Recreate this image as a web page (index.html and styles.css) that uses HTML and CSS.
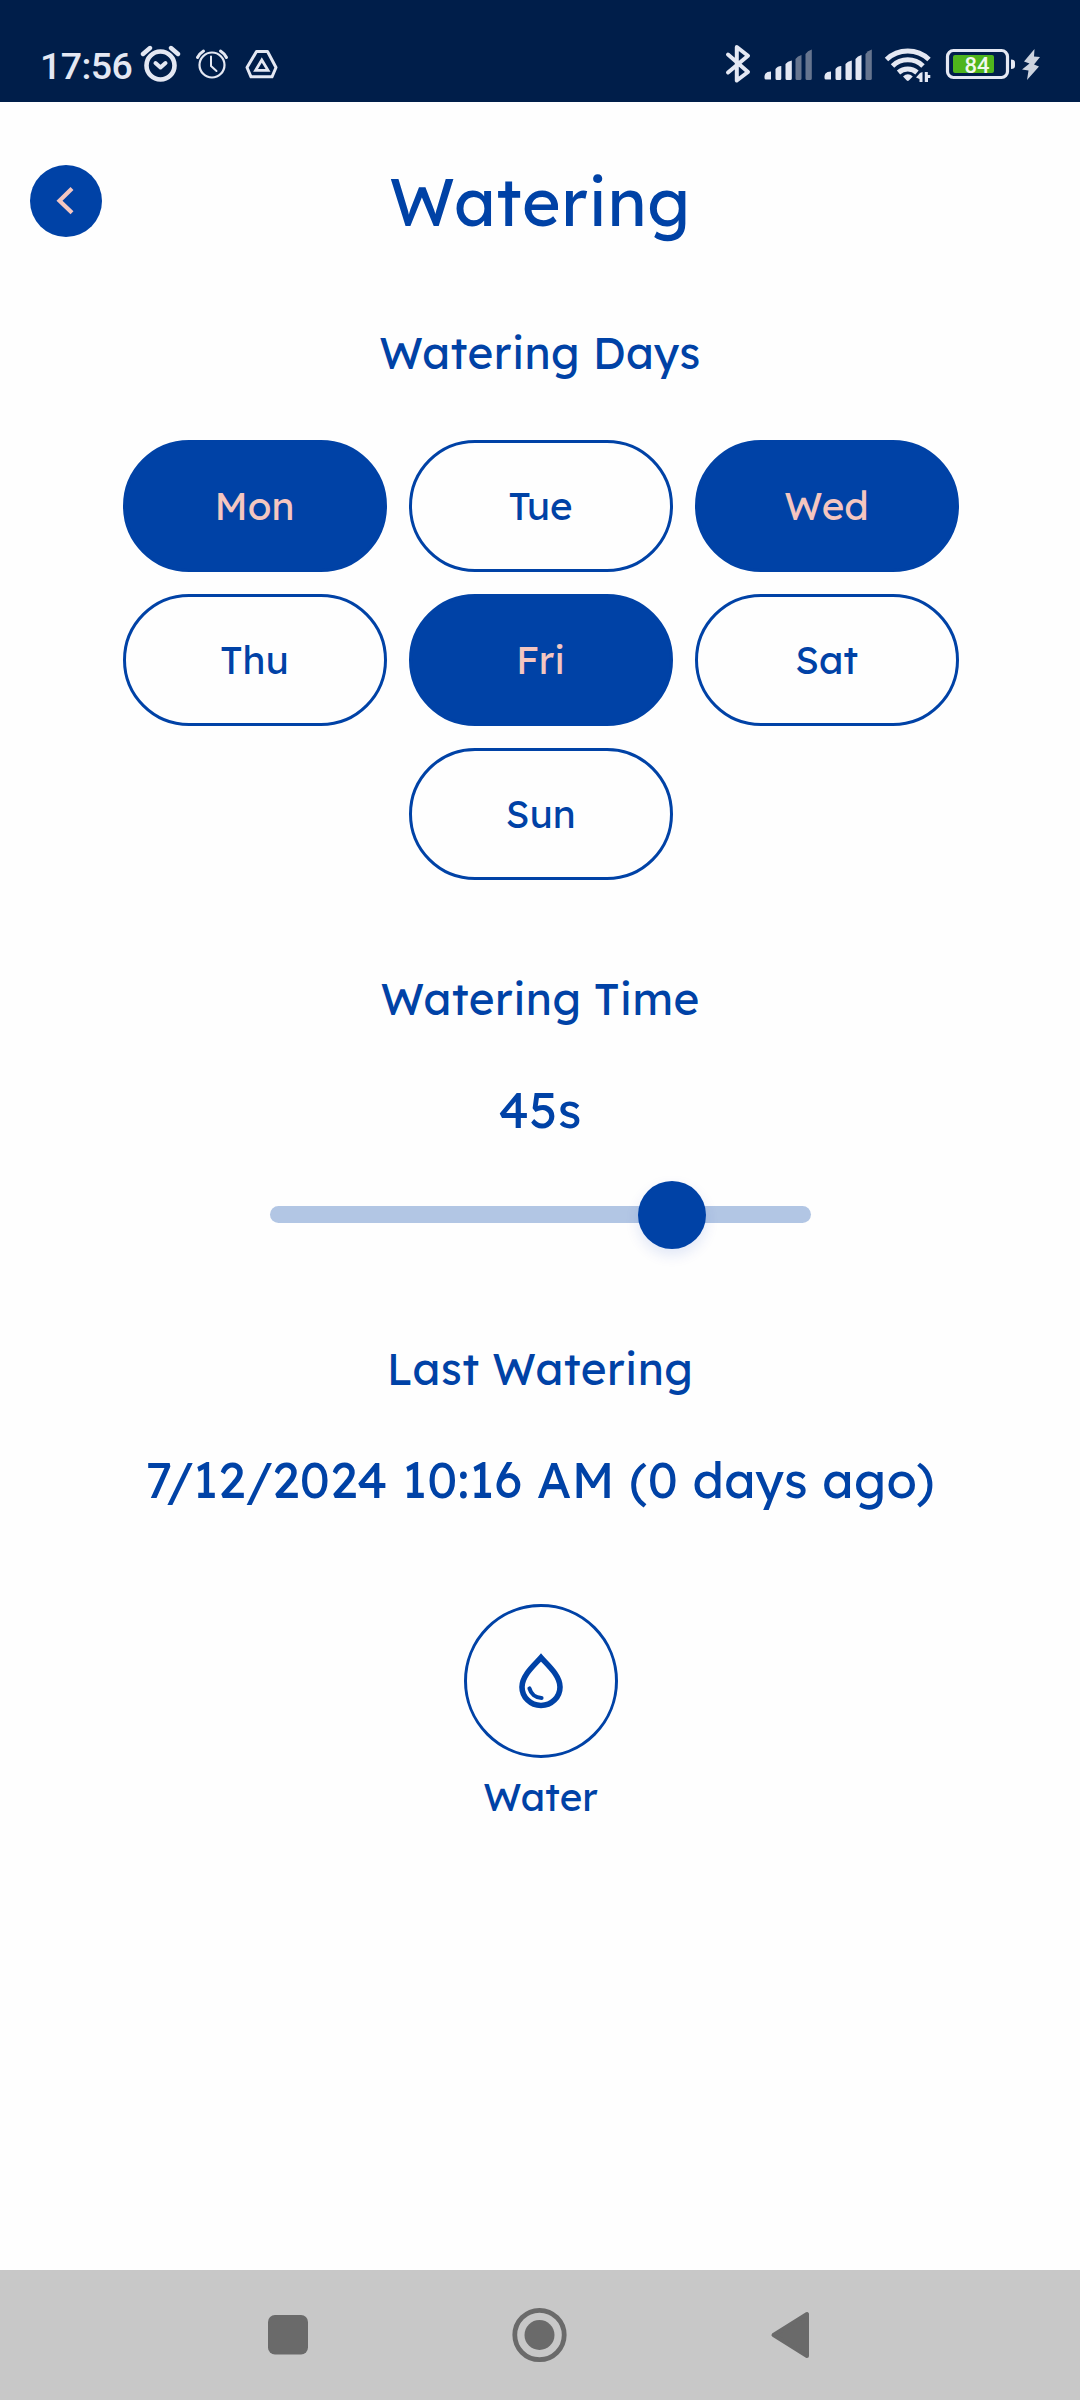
FILE: index.html
```html
<!DOCTYPE html>
<html lang="en">
<head>
<meta charset="utf-8">
<title>Watering</title>
<link rel="stylesheet" href="styles.css">
</head>
<body>
<div class="screen">
  <div class="status">
    <span class="clock">17:56</span>
    <svg class="status-left" width="138" height="42" viewBox="140 42 138 42" fill="none" stroke="#e4e8f3" stroke-linecap="round" stroke-linejoin="round">
      <circle cx="160.500" cy="65.500" r="14" stroke-width="4.600"/>
      <path d="M143 54l7-6M178 54l-7-6" stroke-width="4.400"/>
      <path d="M155.500 63l5 4.500l5-4.500" stroke-width="4"/>
      <circle cx="212" cy="65" r="12.500" stroke-width="2.200"/>
      <path d="M197.500 57.500q2-4 6-6.500M226.500 57.500q-2-4-6-6.500" stroke-width="3"/>
      <path d="M211 56.500v9.500l5.500 5" stroke-width="2"/>
      <path d="M256.500 51.500h11l8.500 16l-4 9.300h-21l-4-9.300z" stroke-width="3"/>
      <path d="M261.800 60l6.200 10.300h-12.400z" stroke-width="2.800" stroke-linejoin="miter"/>
    </svg>
    <svg class="status-right" width="318" height="42" viewBox="724 42 318 42" fill="#e4e8f3">
      <path d="M728 54.500L748 72L736.800 80.500V47L748 55.800L728 72.500" fill="none" stroke="#e4e8f3" stroke-width="4" stroke-linecap="round" stroke-linejoin="round"/>
      <path d="M764.500 76q0-2.500 3-4l3.500-.5v8h-5q-1.500 0-1.500-1.500zM775.500 69q2-3 5.800-3v12.500q0 1.500-1.500 1.500h-2.800q-1.500 0-1.500-1.500zM785.500 64q2-3 6.300-3.500v18q0 1.500-1.500 1.500h-3.300q-1.500 0-1.500-1.500z"/>
      <path d="M795.500 59q2-3 6-4v23.500q0 1.500-1.500 1.500h-3q-1.500 0-1.500-1.500zM805.500 54q2-3.500 6.300-4.500v29q0 1.500-1.500 1.500h-3.300q-1.500 0-1.500-1.500z" fill="#66758f"/>
      <path d="M824.500 76q0-2.500 3-4l3.500-.5v8h-5q-1.500 0-1.500-1.500zM835.500 69q2-3 5.800-3v12.500q0 1.500-1.500 1.500h-2.800q-1.500 0-1.500-1.500zM845.500 64q2-3 6.300-3.500v18q0 1.500-1.500 1.500h-3.300q-1.500 0-1.500-1.500zM855.500 59q2-3 6-4v23.500q0 1.500-1.500 1.500h-3q-1.500 0-1.500-1.500z"/>
      <path d="M865.500 54q2-3.500 6.300-4.500v29q0 1.500-1.500 1.500h-3.300q-1.500 0-1.500-1.500z" fill="#66758f"/>
      <g fill="none" stroke="#e4e8f3" stroke-width="5">
        <path d="M886.500 59.500a31 31 0 0 1 42.500 0"/>
        <path d="M892.500 66a22 22 0 0 1 30.500 0"/>
        <path d="M898.500 72.500a14 14 0 0 1 18.500 0"/>
      </g>
      <path d="M903 76.500q4.800-4.500 9.800 0l-4 4q-1 .8-2 0z"/>
      <path d="M922.500 72v10h-3v-3l-3.500-1.500l4-4.500zM924.800 82v-10h3v3h2.500v3h-2.300v4z"/>
      <rect x="947.500" y="50.500" width="60" height="27" rx="6" fill="none" stroke="#e4e8f3" stroke-width="3.200"/>
      <rect x="953" y="55" width="41" height="18" rx="2" fill="#4fb51c"/>
      <path d="M1011 59.500q4 0 4 3v3.500q0 3-4 3z"/>
      <text class="battery" x="964.500" y="72.800">84</text>
      <path d="M1034.500 49L1024 61.500L1029.500 63.500L1022 69.500L1028.500 70.500L1027 80L1039 66.500L1034 64.500L1040 57L1034 56.500Z" fill="#ccd3df"/>
    </svg>
  </div>

  <div class="header">
    <div class="back">
      <svg width="72" height="72" viewBox="30 165 72 72"><path d="M72 188.500L59.500 200.700L72 212.800" fill="none" stroke="#f4c6c0" stroke-width="4.200"/></svg>
    </div>
    <h1 class="title">Watering</h1>
  </div>

  <h2 class="heading heading-days">Watering Days</h2>
  <div class="days">
    <div class="day selected">Mon</div>
    <div class="day">Tue</div>
    <div class="day selected">Wed</div>
    <div class="day">Thu</div>
    <div class="day selected">Fri</div>
    <div class="day">Sat</div>
    <div class="day">Sun</div>
  </div>

  <h2 class="heading heading-time">Watering Time</h2>
  <div class="value seconds">45s</div>
  <div class="slider"><div class="thumb"></div></div>

  <h2 class="heading heading-last">Last Watering</h2>
  <div class="value date">7/12/2024 10:16 AM (0 days ago)</div>

  <div class="water">
    <div class="water-button">
      <svg width="50" height="60" viewBox="516 1651 50 60" fill="none" stroke="#0042a6">
        <path d="M541 1657.500C535 1664.500 522 1675 522 1687A19 18.500 0 0 0 560 1687C560 1675 547 1664.500 541 1657.500Z" stroke-width="5.600"/>
        <path d="M529.500 1688.500C531 1694 535.500 1697.800 541.500 1698" stroke-width="4.200" stroke-linecap="round"/>
      </svg>
    </div>
    <div class="water-label">Water</div>
  </div>

  <div class="navbar">
    <svg width="1080" height="130" viewBox="0 2270 1080 130" fill="#6a6a6a">
      <rect x="268" y="2315" width="40" height="39.500" rx="7"/>
      <circle cx="539.500" cy="2335" r="24.700" fill="none" stroke="#6a6a6a" stroke-width="4.800"/>
      <circle cx="539.500" cy="2335" r="15"/>
      <path d="M773.500 2335L807 2314V2356Z" stroke="#6a6a6a" stroke-width="4" stroke-linejoin="round"/>
    </svg>
  </div>
</div>
</body>
</html>
```
FILE: styles.css
```css
* { box-sizing: border-box; }

body {
  margin: 0;
  background: #fefefe;
}

.screen {
  display: flex;
  flex-direction: column;
  width: 1080px;
  height: 2400px;
  color: #0042a6;
  font-family: Lexend, Inter, "Open Sans", sans-serif;
  font-weight: 400;
  text-align: center;
}

svg { display: block; flex: none; }

.status {
  display: flex;
  align-items: flex-start;
  height: 102px;
  padding: 42px 38px 0 40px;
  background: #001e4a;
  color: #e4e8f3;
}

.clock {
  width: 100px;
  font: 500 37.5px/48px Roboto, sans-serif;
  letter-spacing: -.6px;
  text-align: left;
}

.status-right { margin-left: auto; }

.battery {
  font: 500 22px Roboto, sans-serif;
  fill: #f2f8ee;
}

.header {
  display: grid;
  grid-template-columns: 72px 1fr 72px;
  height: 74px;
  margin: 63px 30px 0;
}

.back {
  width: 72px;
  height: 72px;
  border-radius: 50%;
  background: #0042a6;
}

.title {
  margin: 0;
  font-size: 66px;
  line-height: 74px;
  font-weight: 400;
  letter-spacing: .6px;
}

.heading {
  margin: 0;
  font-size: 44px;
  line-height: 50px;
  font-weight: 400;
  letter-spacing: .4px;
}

.heading-days { margin-top: 89px; }
.heading-time { margin-top: 94px; }
.heading-last { margin-top: 96px; }

.days {
  display: flex;
  flex-wrap: wrap;
  justify-content: center;
  gap: 22px;
  width: 842px;
  margin: 62px 0 0 120px;
}

.day {
  width: 264px;
  height: 132px;
  padding-right: 1px;
  border: 3px solid #0042a6;
  border-radius: 66px;
  font-size: 38.5px;
  line-height: 126px;
}

.selected {
  background: #0042a6;
  color: #f4c6c0;
}

.value {
  font-size: 49.5px;
  line-height: 58px;
  letter-spacing: .4px;
}

.seconds { margin-top: 56px; }

.date { margin-top: 56px; }

.slider {
  display: flex;
  align-items: center;
  width: 541px;
  height: 17px;
  margin: 68px auto 25px;
  padding-left: 368px;
  border-radius: 9px;
  background: #b2c6e4;
}

.thumb {
  flex: none;
  width: 68px;
  height: 68px;
  border-radius: 50%;
  background: #0042a6;
  box-shadow: 0 6px 14px rgba(0, 60, 190, .12);
}

.water {
  display: flex;
  flex-direction: column;
  align-items: center;
  gap: 16px;
  margin-top: 96px;
  padding-left: 2px;
}

.water-button {
  display: flex;
  align-items: center;
  justify-content: center;
  width: 154px;
  height: 154px;
  border: 3px solid #0042a6;
  border-radius: 50%;
}

.water-label {
  padding-right: 1px;
  font-size: 38.5px;
  line-height: 46px;
}

.navbar {
  height: 130px;
  margin-top: auto;
  background: #c8c8c8;
}
```
